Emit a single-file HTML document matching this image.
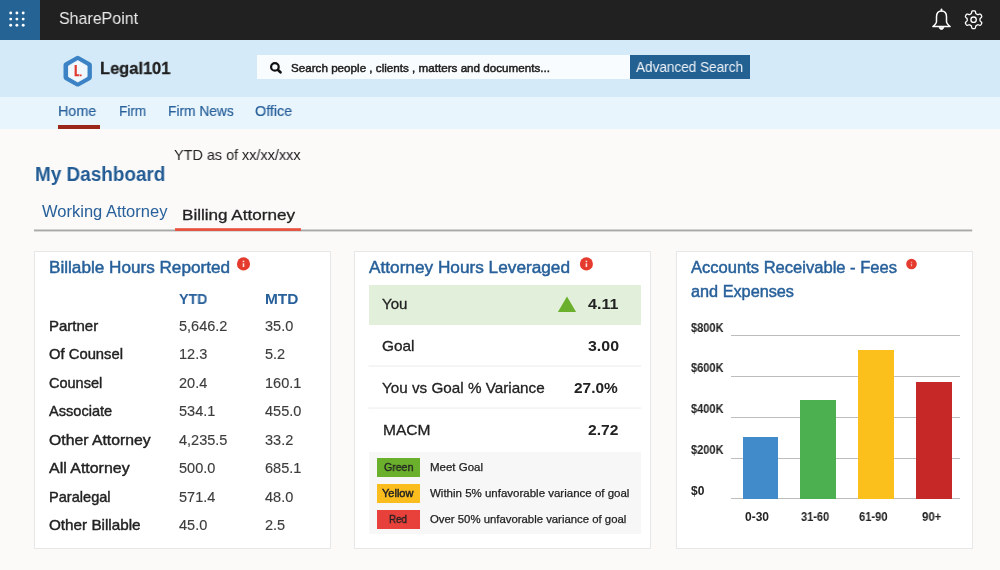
<!DOCTYPE html>
<html lang="en">
<head>
<meta charset="utf-8">
<title>Legal101 - My Dashboard</title>
<style>
*{box-sizing:border-box;margin:0;padding:0}
html,body{width:1000px;height:570px;overflow:hidden}
body{position:relative;background:#fbfaf9;font-family:"Liberation Sans",sans-serif;}
.a{position:absolute}
.t{position:absolute;white-space:pre;line-height:normal;transform-origin:0 0;will-change:transform;}
#topbar{left:0;top:0;width:1000px;height:40.5px;background:#212121}
#waffle{left:0;top:0;width:40px;height:40.5px;background:#246394}
#band{left:0;top:40px;width:1000px;height:56.5px;background:#d4eaf8}
#nav{left:0;top:96.6px;width:1000px;height:32.4px;background:#e9f5fd}
#homeul{left:57.5px;top:124.6px;width:42.6px;height:4.3px;background:#9b271b}
#search{left:257px;top:55px;width:373px;height:24px;background:#f9fcfe}
#adv{left:629.5px;top:55px;width:120.5px;height:24px;background:#236192}
#tabline{left:34px;top:229px;width:938px;height:2px;background:#b3b3b3}
#tabred{left:175px;top:228.3px;width:126px;height:2.4px;background:#e8523f}
.card{background:#fff;border:1px solid #e7e7e7;top:251px;height:297.5px}
#card1{left:34px;width:297px}
#card2{left:354px;width:297px}
#card3{left:676px;width:297px}
#yourow{left:368.5px;top:285px;width:272.5px;height:39.6px;background:#e2efda}
.sep{left:368.5px;width:272.5px;height:1px;background:#ebebeb}
#legend{left:368.6px;top:452px;width:272.4px;height:81.6px;background:#f7f7f7}
.sw{left:377px;width:42.6px;height:19px}
.grid{left:731px;width:228.5px;height:1px;background:#bdbdbd}
.bar{width:35.7px}
</style>
</head>
<body>
<div id="topbar" class="a"></div>
<div id="waffle" class="a">
<svg width="40" height="40" viewBox="0 0 40 40"><g fill="#fff">
<circle cx="10.7" cy="13" r="1.45"/><circle cx="16.9" cy="13" r="1.45"/><circle cx="23.2" cy="13" r="1.45"/>
<circle cx="10.7" cy="19.1" r="1.45"/><circle cx="16.9" cy="19.1" r="1.45"/><circle cx="23.2" cy="19.1" r="1.45"/>
<circle cx="10.7" cy="25.3" r="1.45"/><circle cx="16.9" cy="25.3" r="1.45"/><circle cx="23.2" cy="25.3" r="1.45"/>
</g></svg>
</div>
<!-- bell + gear -->
<svg class="a" style="left:925px;top:0" width="75" height="40" viewBox="925 0 75 40" fill="none" stroke="#fff" stroke-width="1.5" stroke-linejoin="round" stroke-linecap="round">
<path d="M941.5 10.9c-3.2 0-5 2.5-5 5.9v4.6c0 1.7-1 2.9-3.6 5.1h17.2c-2.6-2.2-3.6-3.4-3.6-5.1v-4.6c0-3.4-1.8-5.9-5-5.9z"/><path d="M941.5 9.4v1.2" stroke-width="1.8"/>
<path d="M939.2 27.2c.3 1.5 1.1 2.2 2.3 2.2s2-.7 2.3-2.2z" fill="#fff" stroke-width="1"/>
<circle cx="973.6" cy="19.7" r="2.7" stroke-width="1.3"/>
<path stroke-width="1.3" d="M980.00 19.70 L980.00 19.92 L980.00 20.15 L980.00 20.37 L980.03 20.60 L980.12 20.85 L980.34 21.13 L980.74 21.48 L981.23 21.89 L981.60 22.30 L981.75 22.67 L981.76 23.00 L981.69 23.30 L981.59 23.60 L981.46 23.88 L981.31 24.15 L981.15 24.41 L980.97 24.67 L980.77 24.91 L980.54 25.12 L980.25 25.28 L979.85 25.33 L979.31 25.22 L978.71 24.99 L978.21 24.82 L977.86 24.77 L977.60 24.82 L977.39 24.91 L977.19 25.02 L976.99 25.13 L976.80 25.24 L976.61 25.35 L976.41 25.46 L976.22 25.58 L976.03 25.72 L975.87 25.92 L975.73 26.26 L975.63 26.78 L975.52 27.40 L975.35 27.92 L975.11 28.24 L974.83 28.42 L974.53 28.51 L974.22 28.56 L973.91 28.59 L973.60 28.60 L973.29 28.59 L972.98 28.56 L972.67 28.51 L972.37 28.42 L972.09 28.24 L971.85 27.92 L971.68 27.40 L971.57 26.78 L971.47 26.26 L971.33 25.92 L971.17 25.72 L970.98 25.58 L970.79 25.46 L970.59 25.35 L970.40 25.24 L970.21 25.13 L970.01 25.02 L969.81 24.91 L969.60 24.82 L969.34 24.77 L968.99 24.82 L968.49 24.99 L967.89 25.22 L967.35 25.33 L966.95 25.28 L966.66 25.12 L966.43 24.91 L966.23 24.67 L966.05 24.41 L965.89 24.15 L965.74 23.88 L965.61 23.60 L965.51 23.30 L965.44 23.00 L965.45 22.67 L965.60 22.30 L965.97 21.89 L966.46 21.48 L966.86 21.13 L967.08 20.85 L967.17 20.60 L967.20 20.37 L967.20 20.15 L967.20 19.92 L967.20 19.70 L967.20 19.48 L967.20 19.25 L967.20 19.03 L967.17 18.80 L967.08 18.55 L966.86 18.27 L966.46 17.92 L965.97 17.51 L965.60 17.10 L965.45 16.73 L965.44 16.40 L965.51 16.10 L965.61 15.80 L965.74 15.52 L965.89 15.25 L966.05 14.99 L966.23 14.73 L966.43 14.49 L966.66 14.28 L966.95 14.12 L967.35 14.07 L967.89 14.18 L968.49 14.41 L968.99 14.58 L969.34 14.63 L969.60 14.58 L969.81 14.49 L970.01 14.38 L970.21 14.27 L970.40 14.16 L970.59 14.05 L970.79 13.94 L970.98 13.82 L971.17 13.68 L971.33 13.48 L971.47 13.14 L971.57 12.62 L971.68 12.00 L971.85 11.48 L972.09 11.16 L972.37 10.98 L972.67 10.89 L972.98 10.84 L973.29 10.81 L973.60 10.80 L973.91 10.81 L974.22 10.84 L974.53 10.89 L974.83 10.98 L975.11 11.16 L975.35 11.48 L975.52 12.00 L975.63 12.62 L975.73 13.14 L975.87 13.48 L976.03 13.68 L976.22 13.82 L976.41 13.94 L976.61 14.05 L976.80 14.16 L976.99 14.27 L977.19 14.38 L977.39 14.49 L977.60 14.58 L977.86 14.63 L978.21 14.58 L978.71 14.41 L979.31 14.18 L979.85 14.07 L980.25 14.12 L980.54 14.28 L980.77 14.49 L980.97 14.73 L981.15 14.99 L981.31 15.25 L981.46 15.52 L981.59 15.80 L981.69 16.10 L981.76 16.40 L981.75 16.73 L981.60 17.10 L981.23 17.51 L980.74 17.92 L980.34 18.27 L980.12 18.55 L980.03 18.80 L980.00 19.03 L980.00 19.25 L980.00 19.48 Z"/>
</svg>
<div id="band" class="a"></div>
<div id="nav" class="a"></div>
<div id="homeul" class="a"></div>
<!-- logo hexagon -->
<svg class="a" style="left:60px;top:52px" width="36" height="38" viewBox="60 52 36 38">
<path d="M77.7 58.9 L88.9 65.05 L88.9 77.35 L77.7 83.5 L66.5 77.35 L66.5 65.05 Z" fill="#3b83c5" stroke="#3b83c5" stroke-width="6" stroke-linejoin="round"/>
<path d="M77.8 60.6 L87.1 65.9 L87.1 76.7 L77.8 82 L68.5 76.7 L68.5 65.9 Z" fill="#f1f8fd" stroke="#f1f8fd" stroke-width="0.8" stroke-linejoin="round"/>
<path d="M74.6 65.1h2.2v9.1h2.6v2h-4.8z M80 74.4h1.6v1.8h-1.6z" fill="#e0392e"/>
</svg>
<div id="search" class="a"></div>
<svg class="a" style="left:268px;top:60px" width="16" height="16" viewBox="268 60 16 16" fill="none" stroke="#111" stroke-linecap="round">
<circle cx="274.9" cy="66.9" r="3.8" stroke-width="2.2"/><path d="M278 70 L280.5 72.3" stroke-width="2.7"/>
</svg>
<div id="adv" class="a"></div>
<svg class="a" style="left:0;top:224px" width="1000" height="12" viewBox="0 224 1000 12"><rect x="34" y="229.5" width="938.2" height="1.9" fill="#a9a9a9"/><rect x="175" y="228.2" width="126" height="2.7" fill="#e8503d"/></svg>
<div id="card1" class="a card"></div>
<div id="card2" class="a card"></div>
<div id="card3" class="a card"></div>
<div id="yourow" class="a"></div>
<svg class="a" style="left:368px;top:360px" width="274" height="54" viewBox="368 360 274 54"><rect x="368.5" y="365.55" width="272.5" height="1" fill="#ececec"/><rect x="368.5" y="407.55" width="272.5" height="1" fill="#ececec"/></svg>
<svg class="a" style="left:556px;top:294px" width="22" height="20" viewBox="556 294 22 20"><path d="M567 296.6 L576.1 312 L557.9 312 Z" fill="#6ab02c"/></svg>
<div id="legend" class="a"></div>
<div class="a sw" style="top:458px;background:#6ab02c"></div>
<div class="a sw" style="top:484px;background:#fbbc1e"></div>
<div class="a sw" style="top:509.8px;background:#e8403a"></div>
<!-- info icons -->
<svg class="a" style="left:230px;top:254px" width="700" height="20" viewBox="230 254 700 20">
<circle cx="243.5" cy="263.9" r="6.55" fill="#e53b2f"/><g fill="#fff" fill-opacity=".85"><rect x="242.7" y="263.3" width="1.6" height="3.7"/><rect x="242.7" y="260.7" width="1.6" height="1.5"/></g>
<circle cx="586.4" cy="263.9" r="6.55" fill="#e53b2f"/><g fill="#fff" fill-opacity=".85"><rect x="585.6" y="263.3" width="1.6" height="3.7"/><rect x="585.6" y="260.7" width="1.6" height="1.5"/></g>
<circle cx="911.5" cy="264" r="5.3" fill="#e53b2f"/><g fill="#fff" fill-opacity=".55"><rect x="910.9" y="263.7" width="1.2" height="2.6"/><rect x="910.9" y="261.8" width="1.2" height="1.1"/></g>
</svg>
<!-- chart -->
<div class="a grid" style="top:335px"></div>
<div class="a grid" style="top:376px"></div>
<div class="a grid" style="top:417px"></div>
<div class="a grid" style="top:457.6px"></div>
<div class="a grid" style="top:498.2px"></div>
<div class="a bar" style="left:742.7px;top:437px;height:61.6px;background:#428bca"></div>
<div class="a bar" style="left:800.4px;top:400px;height:98.6px;background:#4caf50"></div>
<div class="a bar" style="left:858.1px;top:349.7px;height:148.9px;background:#fbc01c"></div>
<div class="a bar" style="left:915.7px;top:381.8px;height:116.8px;width:36px;background:#c62828"></div>
<span class="t" style="left:59px;top:9.00px;font-size:17px;font-weight:400;color:#ededed;transform:scaleX(0.9391);">SharePoint</span>
<span class="t" style="left:100px;top:59.40px;font-size:17px;font-weight:700;color:#1e1e1e;transform:scaleX(0.9675);-webkit-text-stroke:0.3px #1e1e1e;">Legal101</span>
<span class="t" style="left:291px;top:62.00px;font-size:11px;font-weight:400;color:#1c1c1c;transform:scaleX(1.0590);-webkit-text-stroke:0.45px #1c1c1c;">Search people , clients , matters and documents...</span>
<span class="t" style="left:636.2px;top:57.50px;font-size:15.5px;font-weight:400;color:#f0f4f8;transform:scaleX(0.8745);">Advanced Search</span>
<span class="t" style="left:57.7px;top:102.00px;font-size:15px;font-weight:400;color:#27609a;transform:scaleX(0.9546);-webkit-text-stroke:0.2px #27609a;">Home</span>
<span class="t" style="left:118.8px;top:102.00px;font-size:15px;font-weight:400;color:#27609a;transform:scaleX(0.9067);-webkit-text-stroke:0.2px #27609a;">Firm</span>
<span class="t" style="left:168px;top:102.00px;font-size:15px;font-weight:400;color:#27609a;transform:scaleX(0.9167);-webkit-text-stroke:0.2px #27609a;">Firm News</span>
<span class="t" style="left:254.5px;top:102.00px;font-size:15px;font-weight:400;color:#27609a;transform:scaleX(0.9561);-webkit-text-stroke:0.2px #27609a;">Office</span>
<span class="t" style="left:173.6px;top:146.30px;font-size:15px;font-weight:400;color:#222;transform:scaleX(0.9605);">YTD as of xx/xx/xxx</span>
<span class="t" style="left:34.6px;top:162.50px;font-size:20px;font-weight:700;color:#235c94;transform:scaleX(0.9462);">My Dashboard</span>
<span class="t" style="left:42px;top:203.00px;font-size:16px;font-weight:400;color:#27609a;transform:scaleX(1.0317);">Working Attorney</span>
<span class="t" style="left:181.6px;top:206.00px;font-size:15px;font-weight:400;color:#222;transform:scaleX(1.1387);-webkit-text-stroke:0.28px #222;">Billing Attorney</span>
<span class="t" style="left:48.6px;top:258.60px;font-size:16px;font-weight:400;color:#27609a;transform:scaleX(1.0711);-webkit-text-stroke:0.45px #27609a;">Billable Hours Reported</span>
<span class="t" style="left:178.6px;top:290.90px;font-size:14.5px;font-weight:700;color:#27609a;transform:scaleX(0.9793);">YTD</span>
<span class="t" style="left:264.6px;top:290.90px;font-size:14.5px;font-weight:700;color:#27609a;transform:scaleX(1.0630);">MTD</span>
<span class="t" style="left:48.6px;top:318.00px;font-size:14.5px;font-weight:400;color:#222;transform:scaleX(1.0344);-webkit-text-stroke:0.4px #222;">Partner</span>
<span class="t" style="left:178.6px;top:318.00px;font-size:14.5px;font-weight:400;color:#3d3d3d;-webkit-text-stroke:0.15px #3d3d3d;">5,646.2</span>
<span class="t" style="left:264.6px;top:318.00px;font-size:14.5px;font-weight:400;color:#3d3d3d;-webkit-text-stroke:0.15px #3d3d3d;">35.0</span>
<span class="t" style="left:48.6px;top:346.49px;font-size:14.5px;font-weight:400;color:#222;transform:scaleX(1.0200);-webkit-text-stroke:0.4px #222;">Of Counsel</span>
<span class="t" style="left:178.6px;top:346.49px;font-size:14.5px;font-weight:400;color:#3d3d3d;-webkit-text-stroke:0.15px #3d3d3d;">12.3</span>
<span class="t" style="left:264.6px;top:346.49px;font-size:14.5px;font-weight:400;color:#3d3d3d;-webkit-text-stroke:0.15px #3d3d3d;">5.2</span>
<span class="t" style="left:48.6px;top:374.98px;font-size:14.5px;font-weight:400;color:#222;transform:scaleX(0.9999);-webkit-text-stroke:0.4px #222;">Counsel</span>
<span class="t" style="left:178.6px;top:374.98px;font-size:14.5px;font-weight:400;color:#3d3d3d;-webkit-text-stroke:0.15px #3d3d3d;">20.4</span>
<span class="t" style="left:264.6px;top:374.98px;font-size:14.5px;font-weight:400;color:#3d3d3d;-webkit-text-stroke:0.15px #3d3d3d;">160.1</span>
<span class="t" style="left:48.6px;top:403.47px;font-size:14.5px;font-weight:400;color:#222;transform:scaleX(1.0052);-webkit-text-stroke:0.4px #222;">Associate</span>
<span class="t" style="left:178.6px;top:403.47px;font-size:14.5px;font-weight:400;color:#3d3d3d;-webkit-text-stroke:0.15px #3d3d3d;">534.1</span>
<span class="t" style="left:264.6px;top:403.47px;font-size:14.5px;font-weight:400;color:#3d3d3d;-webkit-text-stroke:0.15px #3d3d3d;">455.0</span>
<span class="t" style="left:48.6px;top:431.96px;font-size:14.5px;font-weight:400;color:#222;transform:scaleX(1.0866);-webkit-text-stroke:0.4px #222;">Other Attorney</span>
<span class="t" style="left:178.6px;top:431.96px;font-size:14.5px;font-weight:400;color:#3d3d3d;-webkit-text-stroke:0.15px #3d3d3d;">4,235.5</span>
<span class="t" style="left:264.6px;top:431.96px;font-size:14.5px;font-weight:400;color:#3d3d3d;-webkit-text-stroke:0.15px #3d3d3d;">33.2</span>
<span class="t" style="left:48.6px;top:460.45px;font-size:14.5px;font-weight:400;color:#222;transform:scaleX(1.0989);-webkit-text-stroke:0.4px #222;">All Attorney</span>
<span class="t" style="left:178.6px;top:460.45px;font-size:14.5px;font-weight:400;color:#3d3d3d;-webkit-text-stroke:0.15px #3d3d3d;">500.0</span>
<span class="t" style="left:264.6px;top:460.45px;font-size:14.5px;font-weight:400;color:#3d3d3d;-webkit-text-stroke:0.15px #3d3d3d;">685.1</span>
<span class="t" style="left:48.6px;top:488.94px;font-size:14.5px;font-weight:400;color:#222;transform:scaleX(1.0055);-webkit-text-stroke:0.4px #222;">Paralegal</span>
<span class="t" style="left:178.6px;top:488.94px;font-size:14.5px;font-weight:400;color:#3d3d3d;-webkit-text-stroke:0.15px #3d3d3d;">571.4</span>
<span class="t" style="left:264.6px;top:488.94px;font-size:14.5px;font-weight:400;color:#3d3d3d;-webkit-text-stroke:0.15px #3d3d3d;">48.0</span>
<span class="t" style="left:48.6px;top:517.43px;font-size:14.5px;font-weight:400;color:#222;transform:scaleX(1.0523);-webkit-text-stroke:0.4px #222;">Other Billable</span>
<span class="t" style="left:178.6px;top:517.43px;font-size:14.5px;font-weight:400;color:#3d3d3d;-webkit-text-stroke:0.15px #3d3d3d;">45.0</span>
<span class="t" style="left:264.6px;top:517.43px;font-size:14.5px;font-weight:400;color:#3d3d3d;-webkit-text-stroke:0.15px #3d3d3d;">2.5</span>
<span class="t" style="left:368.8px;top:258.60px;font-size:16px;font-weight:400;color:#27609a;transform:scaleX(1.0761);-webkit-text-stroke:0.45px #27609a;">Attorney Hours Leveraged</span>
<span class="t" style="left:382.4px;top:295.00px;font-size:15px;font-weight:400;color:#222;transform:scaleX(1.0035);-webkit-text-stroke:0.3px #222;">You</span>
<span class="t" style="left:381.8px;top:337.00px;font-size:15px;font-weight:400;color:#222;transform:scaleX(1.0256);-webkit-text-stroke:0.3px #222;">Goal</span>
<span class="t" style="left:382.4px;top:379.00px;font-size:15px;font-weight:400;color:#222;transform:scaleX(1.0163);-webkit-text-stroke:0.3px #222;">You vs Goal % Variance</span>
<span class="t" style="left:382.6px;top:420.60px;font-size:15px;font-weight:400;color:#222;transform:scaleX(1.0365);-webkit-text-stroke:0.3px #222;">MACM</span>
<span class="t" style="left:588px;top:295.00px;font-size:15px;font-weight:700;color:#222;transform:scaleX(1.0714);">4.11</span>
<span class="t" style="left:588px;top:337.00px;font-size:15px;font-weight:700;color:#222;transform:scaleX(1.0615);">3.00</span>
<span class="t" style="left:574px;top:379.00px;font-size:15px;font-weight:700;color:#222;transform:scaleX(1.0295);">27.0%</span>
<span class="t" style="left:588px;top:420.60px;font-size:15px;font-weight:700;color:#222;transform:scaleX(1.0410);">2.72</span>
<span class="t" style="left:430px;top:461.00px;font-size:11px;font-weight:400;color:#222;transform:scaleX(1.0443);-webkit-text-stroke:0.25px #222;">Meet Goal</span>
<span class="t" style="left:430.2px;top:487.00px;font-size:11px;font-weight:400;color:#222;transform:scaleX(1.0452);-webkit-text-stroke:0.25px #222;">Within 5% unfavorable variance of goal</span>
<span class="t" style="left:430.2px;top:513.00px;font-size:11px;font-weight:400;color:#222;transform:scaleX(1.0322);-webkit-text-stroke:0.25px #222;">Over 50% unfavorable variance of goal</span>
<span class="t" style="left:383.5px;top:461.00px;font-size:11px;font-weight:400;color:#222;transform:scaleX(0.9615);-webkit-text-stroke:0.35px #222;">Green</span>
<span class="t" style="left:382px;top:487.00px;font-size:11px;font-weight:400;color:#222;transform:scaleX(0.9998);-webkit-text-stroke:0.45px #222;">Yellow</span>
<span class="t" style="left:388.5px;top:513.00px;font-size:11px;font-weight:400;color:#222;transform:scaleX(0.8916);-webkit-text-stroke:0.35px #222;">Red</span>
<span class="t" style="left:691.2px;top:258.60px;font-size:16px;font-weight:400;color:#27609a;transform:scaleX(1.0341);-webkit-text-stroke:0.45px #27609a;">Accounts Receivable - Fees</span>
<span class="t" style="left:691.2px;top:283.20px;font-size:16px;font-weight:400;color:#27609a;transform:scaleX(1.0157);-webkit-text-stroke:0.45px #27609a;">and Expenses</span>
<span class="t" style="left:691px;top:320.60px;font-size:12px;font-weight:700;color:#222;transform:scaleX(0.9187);">$800K</span>
<span class="t" style="left:691px;top:361.35px;font-size:12px;font-weight:700;color:#222;transform:scaleX(0.9187);">$600K</span>
<span class="t" style="left:691px;top:402.10px;font-size:12px;font-weight:700;color:#222;transform:scaleX(0.9187);">$400K</span>
<span class="t" style="left:691px;top:442.85px;font-size:12px;font-weight:700;color:#222;transform:scaleX(0.9187);">$200K</span>
<span class="t" style="left:691px;top:483.60px;font-size:12px;font-weight:700;color:#222;transform:scaleX(0.9731);">$0</span>
<span class="t" style="left:745px;top:510.00px;font-size:12px;font-weight:700;color:#222;transform:scaleX(0.9821);">0-30</span>
<span class="t" style="left:801.4px;top:510.00px;font-size:12px;font-weight:700;color:#222;transform:scaleX(0.9185);">31-60</span>
<span class="t" style="left:859.4px;top:510.00px;font-size:12px;font-weight:700;color:#222;transform:scaleX(0.9315);">61-90</span>
<span class="t" style="left:921.8px;top:510.00px;font-size:12px;font-weight:700;color:#222;transform:scaleX(0.9529);">90+</span>
</body>
</html>
